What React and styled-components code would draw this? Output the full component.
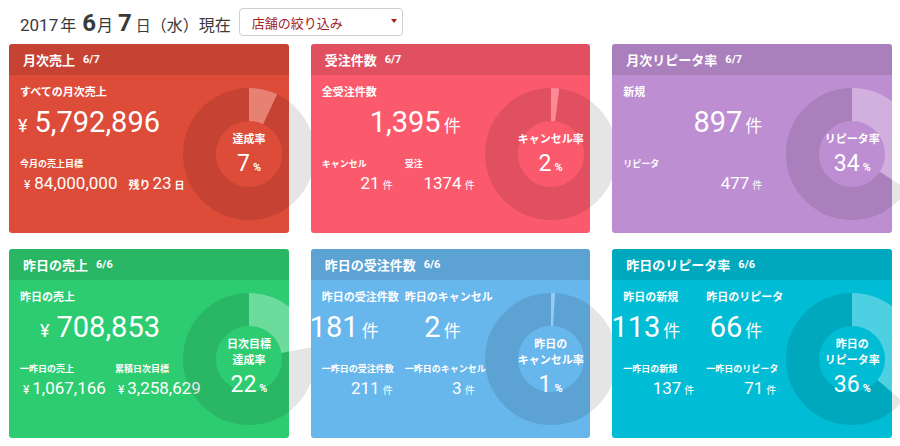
import React from "react";
import styled, { createGlobalStyle } from "styled-components";

const Global = createGlobalStyle`
  html, body { margin: 0; padding: 0; background: #fff; overflow: hidden; }
  body { font-family: Roboto, "Noto Sans CJK JP", sans-serif; color: #333; }
  * { box-sizing: border-box; }
`;

const Page = styled.div`
  width: 900px;
  height: 446px;
  overflow: hidden;
  padding: 0 8px 0 9px;
`;

const TopBar = styled.div`
  display: flex;
  align-items: center;
  height: 44px;
  padding-left: 11px;
`;

const Title = styled.div`
  display: flex;
  align-items: baseline;
  color: #3a3a3a;
  white-space: nowrap;
  padding-top: 2px;
`;

const T = styled.span`
  font-size: ${(p) => p.$s}px;
  font-weight: ${(p) => (p.$b ? 700 : 400)};
  margin: 0 ${(p) => p.$mr || 0}px 0 ${(p) => p.$ml || 0}px;
`;

const Select = styled.div`
  margin-left: 8px;
  width: 164px;
  height: 28px;
  border: 1px solid #cfcfcf;
  border-radius: 4px;
  display: flex;
  align-items: center;
  justify-content: space-between;
  padding: 0 5px 0 12px;
  color: #a3221c;
  font-size: 13px;
  background: #fff;
`;

const Caret = styled.span`
  width: 0;
  height: 0;
  border-left: 3px solid transparent;
  border-right: 3px solid transparent;
  border-top: 4px solid #a3221c;
  margin-top: -3px;
`;

const Grid = styled.div`
  display: grid;
  grid-template-columns: repeat(3, minmax(0, 1fr));
  column-gap: 22px;
  row-gap: 16px;
`;

const Card = styled.div`
  position: relative;
  min-width: 0;
  height: 189px;
  border-radius: 3px;
  background: ${(p) => p.$bg};
  color: #fff;
  display: flex;
  flex-direction: column;
`;

const CardHead = styled.div`
  flex: none;
  height: 31px;
  background: rgba(0, 0, 0, 0.1);
  border-radius: 3px 3px 0 0;
  display: flex;
  align-items: center;
  gap: 8px;
  padding-left: 14px;
  white-space: nowrap;
`;

const HeadTitle = styled.span`
  font-size: 13px;
  font-weight: 700;
`;

const HeadDate = styled.span`
  font-size: 11px;
  font-weight: 700;
`;

const CardBody = styled.div`
  flex: 1;
  display: flex;
  min-height: 0;
`;

const Info = styled.div`
  flex: 0 0 176px;
  padding: 10px 0 0 11px;
`;

const Row = styled.div`
  display: grid;
  grid-template-columns: ${(p) => p.$cols || "165px"};
  margin-top: ${(p) => p.$mt || 0}px;
`;

const Label = styled.div`
  font-size: 11px;
  line-height: 16px;
  font-weight: 700;
  white-space: nowrap;
`;

const SubLabel = styled.div`
  font-size: 9px;
  line-height: 14px;
  font-weight: 700;
  white-space: nowrap;
`;

const BigValue = styled.div`
  display: flex;
  justify-content: flex-end;
  align-items: baseline;
  height: 34px;
  line-height: 34px;
  font-size: 29px;
  white-space: nowrap;
  padding-right: ${(p) => p.$pr ?? 25}px;
`;

const SubValue = styled.div`
  display: flex;
  justify-content: ${(p) => (p.$right ? "flex-end" : "flex-start")};
  align-items: baseline;
  height: 22px;
  line-height: 22px;
  font-size: 17px;
  white-space: nowrap;
  padding: 0 ${(p) => p.$pr || 0}px 0 ${(p) => p.$pl || 0}px;
`;

const Unit = styled.span`
  font-size: ${(p) => p.$s}px;
  font-weight: ${(p) => p.$w || 400};
  margin: 0 ${(p) => p.$mr || 0}px 0 ${(p) => p.$ml || 0}px;
`;

const DonutBox = styled.div`
  position: relative;
  flex: 0 0 132px;
  width: 132px;
  height: 132px;
  margin-left: -2px;
  align-self: center;
`;

const DonutSvg = styled.svg`
  display: block;
`;

const DonutText = styled.div`
  position: absolute;
  left: -12px;
  right: -12px;
  top: 44px;
  text-align: center;
`;

const DonutLabel = styled.div`
  font-size: 11px;
  line-height: 16px;
  font-weight: 700;
  white-space: nowrap;
`;

const DonutNum = styled.div`
  margin-top: 4px;
  font-size: 23px;
  line-height: 24px;
`;

const Pct = styled.span`
  font-size: 11px;
  font-weight: 700;
  margin-left: 3px;
`;

function Donut({ pct, labels }) {
  const r = 49.5;
  const c = 2 * Math.PI * r;
  const on = (c * pct) / 100;
  return (
    <DonutBox>
      <DonutSvg width="132" height="132" viewBox="0 0 132 132">
        <g transform="rotate(-90 66 66)">
          <circle
            cx="66"
            cy="66"
            r={r}
            fill="none"
            stroke="rgba(0,0,0,0.1)"
            strokeWidth="33"
            strokeDasharray={`${c - on} ${c}`}
            strokeDashoffset={-on}
          />
          <circle
            cx="66"
            cy="66"
            r={r}
            fill="none"
            stroke="rgba(255,255,255,0.3)"
            strokeWidth="33"
            strokeDasharray={`${on} ${c}`}
          />
        </g>
      </DonutSvg>
      <DonutText>
        {labels.map((l) => (
          <DonutLabel key={l}>{l}</DonutLabel>
        ))}
        <DonutNum>
          {pct}
          <Pct>%</Pct>
        </DonutNum>
      </DonutText>
    </DonutBox>
  );
}

const Ken = () => <Unit $s={17} $ml={3}>件</Unit>;
const KenS = () => <Unit $s={10} $ml={3}>件</Unit>;

function CardFrame({ bg, title, date, children, pct, labels }) {
  return (
    <Card $bg={bg}>
      <CardHead>
        <HeadTitle>{title}</HeadTitle>
        <HeadDate>{date}</HeadDate>
      </CardHead>
      <CardBody>
        <Info>{children}</Info>
        <Donut pct={pct} labels={labels} />
      </CardBody>
    </Card>
  );
}

const TWO = "83px 82px";

export default function App() {
  return (
    <Page>
      <Global />
      <TopBar>
        <Title>
          <T $s={17}>2017</T>
          <T $s={16} $ml={2} $mr={6}>年</T>
          <T $s={24} $b>6</T>
          <T $s={16} $ml={1} $mr={5}>月</T>
          <T $s={24} $b>7</T>
          <T $s={15} $ml={4}>日</T>
          <T $s={16}>（水）現在</T>
        </Title>
        <Select>
          <span>店舗の絞り込み</span>
          <Caret />
        </Select>
      </TopBar>

      <Grid>
        <CardFrame bg="#dd4b39" title="月次売上" date="6/7" pct={7} labels={["達成率"]}>
          <Label>すべての月次売上</Label>
          <Row $mt={4}>
            <BigValue>
              <Unit $s={18} $mr={7}>¥</Unit>5,792,896
            </BigValue>
          </Row>
          <Row $mt={18}>
            <SubLabel>今月の売上目標</SubLabel>
          </Row>
          <Row $mt={1}>
            <SubValue $pl={4}>
              <Unit $s={12} $mr={4}>¥</Unit>84,000,000
              <Unit $s={11} $w={700} $ml={11} $mr={2}>残り</Unit>23
              <Unit $s={10} $w={700} $ml={3}>日</Unit>
            </SubValue>
          </Row>
        </CardFrame>

        <CardFrame bg="#fb5a6c" title="受注件数" date="6/7" pct={2} labels={["キャンセル率"]}>
          <Label>全受注件数</Label>
          <Row $mt={4}>
            <BigValue $pr={26}>
              1,395<Ken />
            </BigValue>
          </Row>
          <Row $mt={18} $cols={TWO}>
            <SubLabel>キャンセル</SubLabel>
            <SubLabel>受注</SubLabel>
          </Row>
          <Row $mt={1} $cols={TWO}>
            <SubValue $right $pr={12}>
              21<KenS />
            </SubValue>
            <SubValue $right $pr={12}>
              1374<KenS />
            </SubValue>
          </Row>
        </CardFrame>

        <CardFrame bg="#bd8ed2" title="月次リピータ率" date="6/7" pct={34} labels={["リピータ率"]}>
          <Label>新規</Label>
          <Row $mt={4}>
            <BigValue $pr={26}>
              897<Ken />
            </BigValue>
          </Row>
          <Row $mt={18}>
            <SubLabel>リピータ</SubLabel>
          </Row>
          <Row $mt={1}>
            <SubValue $right $pr={26}>
              477<KenS />
            </SubValue>
          </Row>
        </CardFrame>

        <CardFrame bg="#2ecc71" title="昨日の売上" date="6/6" pct={22} labels={["日次目標", "達成率"]}>
          <Label>昨日の売上</Label>
          <Row $mt={4}>
            <BigValue>
              <Unit $s={18} $mr={7}>¥</Unit>708,853
            </BigValue>
          </Row>
          <Row $mt={18} $cols="95px 70px">
            <SubLabel>一昨日の売上</SubLabel>
            <SubLabel>累積日次目標</SubLabel>
          </Row>
          <Row $mt={1} $cols="95px 70px">
            <SubValue $pl={3}>
              <Unit $s={12} $mr={3}>¥</Unit>1,067,166
            </SubValue>
            <SubValue $pl={3}>
              <Unit $s={12} $mr={3}>¥</Unit>3,258,629
            </SubValue>
          </Row>
        </CardFrame>

        <CardFrame bg="#67b6ec" title="昨日の受注件数" date="6/6" pct={1} labels={["昨日の", "キャンセル率"]}>
          <Row $cols={TWO}>
            <Label>昨日の受注件数</Label>
            <Label>昨日のキャンセル</Label>
          </Row>
          <Row $mt={4} $cols={TWO}>
            <BigValue $pr={26}>
              181<Ken />
            </BigValue>
            <BigValue $pr={26}>
              2<Ken />
            </BigValue>
          </Row>
          <Row $mt={18} $cols={TWO}>
            <SubLabel>一昨日の受注件数</SubLabel>
            <SubLabel>一昨日のキャンセル</SubLabel>
          </Row>
          <Row $mt={1} $cols={TWO}>
            <SubValue $right $pr={12}>
              211<KenS />
            </SubValue>
            <SubValue $right $pr={12}>
              3<KenS />
            </SubValue>
          </Row>
        </CardFrame>

        <CardFrame bg="#00bcd4" title="昨日のリピータ率" date="6/6" pct={36} labels={["昨日の", "リピータ率"]}>
          <Row $cols={TWO}>
            <Label>昨日の新規</Label>
            <Label>昨日のリピータ</Label>
          </Row>
          <Row $mt={4} $cols={TWO}>
            <BigValue $pr={26}>
              113<Ken />
            </BigValue>
            <BigValue $pr={26}>
              66<Ken />
            </BigValue>
          </Row>
          <Row $mt={18} $cols={TWO}>
            <SubLabel>一昨日の新規</SubLabel>
            <SubLabel>一昨日のリピータ</SubLabel>
          </Row>
          <Row $mt={1} $cols={TWO}>
            <SubValue $right $pr={12}>
              137<KenS />
            </SubValue>
            <SubValue $right $pr={12}>
              71<KenS />
            </SubValue>
          </Row>
        </CardFrame>
      </Grid>
    </Page>
  );
}
